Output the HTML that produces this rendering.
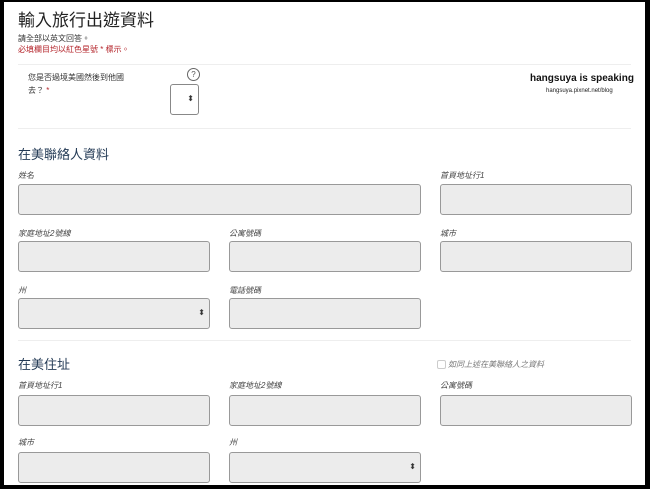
<!DOCTYPE html><html><head><meta charset="utf-8"><style>
body{margin:0;width:650px;height:489px;background:#000;overflow:hidden;font-family:"Liberation Sans","Noto Sans CJK TC",sans-serif;}
#p{position:absolute;left:4px;top:2px;width:641px;height:483px;background:#fff;overflow:hidden}
.a{position:absolute;white-space:nowrap}
.l{position:absolute;font-size:8px;font-style:italic;color:#444}
.i{position:absolute;background:#ececec;border:1px solid #999;border-radius:3px;box-sizing:border-box;height:31px}
.h{position:absolute;font-size:13px;color:#233a55}
.hr{position:absolute;left:14px;right:14px;height:1px;background:#eee}
.s::after{content:"⬍";position:absolute;right:4px;top:9px;font-size:8px;color:#333;font-style:normal}
</style></head><body><div id="p">
<div class="a" style="left:14px;top:4px;font-size:17px;color:#222">輸入旅行出遊資料</div>
<div class="a" style="left:14px;top:31px;font-size:8px;color:#333">請全部以英文回答。</div>
<div class="a" style="left:14px;top:42px;font-size:8px;color:#b5272d">必填欄目均以紅色星號 * 標示。</div>
<div class="hr" style="top:62px"></div>
<div class="a" style="left:24px;top:69px;font-size:8px;color:#333;line-height:13px">您是否過境美國然後到他國<br>去？ <span style="color:#b5272d">*</span></div>
<div class="a" style="left:183px;top:66px;width:11px;height:11px;border:1px solid #666;border-radius:50%;font-size:8px;text-align:center;line-height:11px;color:#555">?</div>
<div class="i s" style="left:166px;top:82px;width:29px;height:31px;background:#fff;border-color:#888"></div>
<div class="a" style="left:526px;top:71px;font-size:10px;font-weight:bold;color:#111">hangsuya is speaking</div>
<div class="a" style="left:542px;top:86px;font-size:6px;color:#222">hangsuya.pixnet.net/blog</div>
<div class="hr" style="top:126px"></div>
<div class="h" style="left:14px;top:142px">在美聯絡人資料</div>
<div class="l" style="left:14px;top:168px">姓名</div>
<div class="i" style="left:14px;top:182px;width:403px"></div>
<div class="l" style="left:436px;top:168px">首頁地址行1</div>
<div class="i" style="left:436px;top:182px;width:192px"></div>
<div class="l" style="left:14px;top:226px">家庭地址2號線</div>
<div class="l" style="left:225px;top:226px">公寓號碼</div>
<div class="l" style="left:436px;top:226px">城市</div>
<div class="i" style="left:14px;top:239px;width:192px"></div>
<div class="i" style="left:225px;top:239px;width:192px"></div>
<div class="i" style="left:436px;top:239px;width:192px"></div>
<div class="l" style="left:14px;top:283px">州</div>
<div class="l" style="left:225px;top:283px">電話號碼</div>
<div class="i s" style="left:14px;top:296px;width:192px"></div>
<div class="i" style="left:225px;top:296px;width:192px"></div>
<div class="hr" style="top:338px"></div>
<div class="h" style="left:14px;top:352px">在美住址</div>
<div class="a" style="left:433px;top:358px;width:7px;height:7px;border:1px solid #ccc;border-radius:2px"></div>
<div class="l" style="left:444px;top:357px;color:#777">如同上述在美聯絡人之資料</div>
<div class="l" style="left:14px;top:378px">首頁地址行1</div>
<div class="l" style="left:225px;top:378px">家庭地址2號線</div>
<div class="l" style="left:436px;top:378px">公寓號碼</div>
<div class="i" style="left:14px;top:393px;width:192px"></div>
<div class="i" style="left:225px;top:393px;width:192px"></div>
<div class="i" style="left:436px;top:393px;width:192px"></div>
<div class="l" style="left:14px;top:435px">城市</div>
<div class="l" style="left:225px;top:435px">州</div>
<div class="i" style="left:14px;top:450px;width:192px"></div>
<div class="i s" style="left:225px;top:450px;width:192px"></div>
</div></body></html>
